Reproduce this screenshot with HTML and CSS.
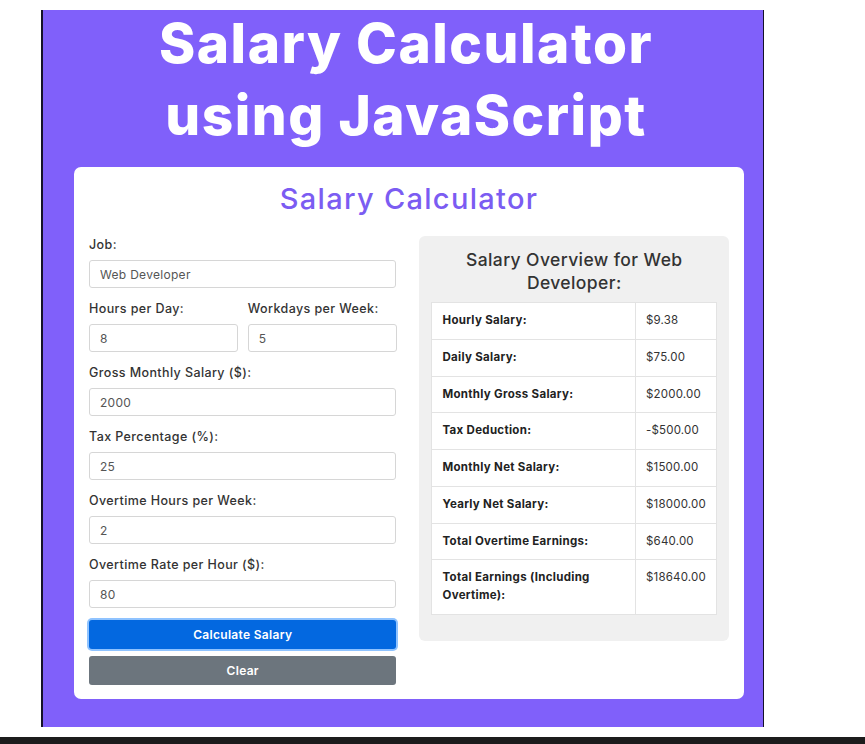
FILE: index.html
```html
<!DOCTYPE html>
<html lang="en">
<head>
<meta charset="utf-8">
<title>Salary Calculator using JavaScript</title>
<link rel="stylesheet" href="styles.css">
</head>
<body>
<div class="page">
  <div class="frame">
    <h1 class="headline">Salary Calculator<br>using JavaScript</h1>
    <div class="card">
      <h2 class="card-title">Salary Calculator</h2>
      <div class="columns">
        <form class="form">
          <label class="label">Job:</label>
          <input class="input" type="text" value="Web Developer">
          <div class="pair">
            <div class="field">
              <label class="label">Hours per Day:</label>
              <input class="input" type="text" value="8">
            </div>
            <div class="field">
              <label class="label">Workdays per Week:</label>
              <input class="input" type="text" value="5">
            </div>
          </div>
          <label class="label">Gross Monthly Salary ($):</label>
          <input class="input" type="text" value="2000">
          <label class="label">Tax Percentage (%):</label>
          <input class="input" type="text" value="25">
          <label class="label">Overtime Hours per Week:</label>
          <input class="input" type="text" value="2">
          <label class="label">Overtime Rate per Hour ($):</label>
          <input class="input" type="text" value="80">
          <button type="button" class="btn btn-primary">Calculate Salary</button>
          <button type="button" class="btn btn-secondary">Clear</button>
        </form>
        <div class="overview">
          <h3 class="overview-title">Salary Overview for Web Developer:</h3>
          <table class="table">
            <tr><th>Hourly Salary:</th><td>$9.38</td></tr>
            <tr><th>Daily Salary:</th><td>$75.00</td></tr>
            <tr><th>Monthly Gross Salary:</th><td>$2000.00</td></tr>
            <tr><th>Tax Deduction:</th><td>-$500.00</td></tr>
            <tr><th>Monthly Net Salary:</th><td>$1500.00</td></tr>
            <tr><th>Yearly Net Salary:</th><td>$18000.00</td></tr>
            <tr><th>Total Overtime Earnings:</th><td>$640.00</td></tr>
            <tr><th>Total Earnings (Including Overtime):</th><td>$18640.00</td></tr>
          </table>
        </div>
      </div>
    </div>
  </div>
  <div class="bottom-bar"></div>
</div>
</body>
</html>
```
FILE: styles.css
```css
* { box-sizing: border-box; }
html, body { margin: 0; padding: 0; background: #fff; }
body { font-family: "Inter", "Noto Sans", sans-serif; color: #333; }

.page { padding-top: 10px; }

.frame {
  display: flow-root;
  margin-left: 41px;
  width: 723px;
  height: 717px;
  background: #8060fa;
  border-left: 2px solid #15112a;
  border-right: 1px solid #15112a;
}

.headline {
  margin: -3px 0 16px 0;
  padding-left: 6px;
  text-align: center;
  color: #fff;
  font-family: "Inter", sans-serif;
  font-weight: 800;
  font-size: 55px;
  line-height: 72px;
  letter-spacing: 1.5px;
}

.card {
  margin-left: 31px;
  width: 670px;
  background: #fff;
  border-radius: 7px;
  padding: 12px 15px 14px 15px;
}

.card-title {
  margin: 0 0 17px 0;
  text-align: center;
  color: #7b5cf2;
  font-weight: 500;
  font-size: 29px;
  line-height: 40px;
  letter-spacing: 1.3px;
}

.columns {
  display: flex;
  gap: 23px;
  align-items: flex-start;
}

.form {
  width: 308px;
  display: flex;
  flex-direction: column;
  margin: 0;
}

.label {
  display: block;
  font-size: 12.5px;
  font-weight: 500;
  line-height: 15px;
  letter-spacing: 0.4px;
  color: #333;
  margin: 1px 0 8px 0;
}

.input {
  display: block;
  width: 100%;
  height: 28px;
  border: 1px solid #d6d6d6;
  border-radius: 3px;
  padding: 0 10px;
  font-family: inherit;
  font-size: 12px;
  letter-spacing: 0.3px;
  color: #555;
  margin: 0 0 12px 0;
  background: #fff;
}

.pair { display: flex; gap: 10px; }
.field { flex: 1; }

.btn {
  display: block;
  width: 100%;
  border: none;
  border-radius: 3px;
  color: #fff;
  font-family: inherit;
  font-weight: 600;
  font-size: 12px;
  letter-spacing: 0.3px;
  height: 29px;
  cursor: pointer;
}
.btn-primary {
  background: #0368e0;
  box-shadow: 0 0 0 2px #8fc3ff;
  margin-bottom: 7px;
}
.btn-secondary { background: #6c757d; }

.overview {
  width: 310px;
  background: #f0f0f0;
  border-radius: 6px;
  padding: 12px 12px 26px 12px;
}

.overview-title {
  margin: 0 0 8px 0;
  text-align: center;
  font-weight: 500;
  font-size: 17.5px;
  line-height: 23px;
  letter-spacing: 0.4px;
  color: #333;
}

.table {
  width: 100%;
  border-collapse: collapse;
  background: #fff;
  font-size: 11.5px;
}
.table th, .table td {
  border: 1px solid #e3e3e3;
  padding: 9px 10px;
  line-height: 17.75px;
  text-align: left;
  vertical-align: top;
}
.table th { font-weight: 700; color: #222; width: 205px; letter-spacing: 0.3px; }
.table td { font-weight: 400; color: #333; letter-spacing: 0.2px; }

.bottom-bar {
  margin-top: 10px;
  height: 7px;
  background: #1c1c1c;
}
```
